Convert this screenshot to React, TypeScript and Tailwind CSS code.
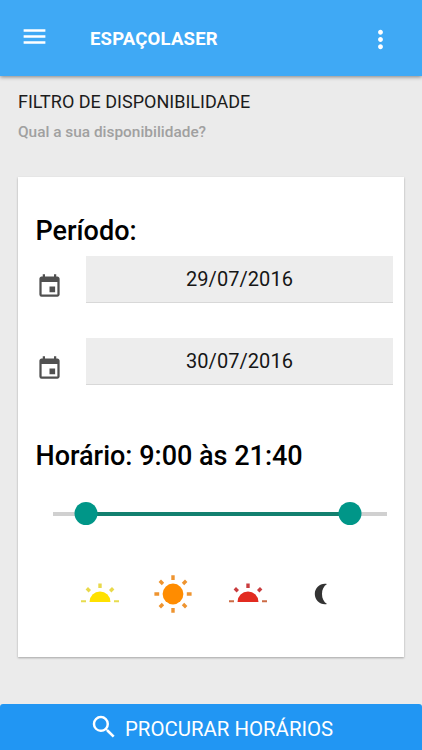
import { MdEvent, MdMenu, MdMoreVert, MdSearch } from 'react-icons/md'

const DATES = ['29/07/2016', '30/07/2016']

const MIN = 0
const MAX = 334
const RANGE = { from: 33, to: 296.5 }

const pct = (value: number) => `${((value - MIN) / (MAX - MIN)) * 100}%`

function Header() {
  return (
    <header className="relative flex h-[76px] shrink-0 items-center bg-[#3fa9f5] pl-[20px] pr-[27px] text-white shadow-[0_1px_4px_rgba(0,0,0,0.45)]">
      <button aria-label="Menu" className="mb-[3px]">
        <MdMenu size={29} />
      </button>
      <h1 className="ml-[41px] mt-px text-[18.5px] font-bold leading-6 tracking-[0.2px]">ESPAÇOLASER</h1>
      <button aria-label="Mais opções" className="ml-auto mt-[2px]">
        <MdMoreVert size={29} />
      </button>
    </header>
  )
}

function DateRow({ date }: { date: string }) {
  return (
    <div className="flex h-[47px] items-start">
      <MdEvent size={27} className="mt-[17px] shrink-0 text-[#505050]" />
      <button className="ml-[23px] h-[47px] flex-1 border-b border-[#d8d8d8] bg-[#ededed] text-[20px] tracking-[0.05px] text-[#161616]">
        {date}
      </button>
    </div>
  )
}

function RangeSlider() {
  return (
    <div className="relative mx-[17px] h-6">
      <div className="absolute inset-x-0 top-[10px] h-[4px] bg-[#d0d0d0]" />
      <div
        className="absolute top-[10px] h-[4px] bg-[#12806f]"
        style={{ left: pct(RANGE.from), right: pct(MAX - RANGE.to) }}
      />
      {[RANGE.from, RANGE.to].map((value) => (
        <span
          key={value}
          className="absolute top-0 size-[23px] -translate-x-1/2 rounded-full bg-[#009688]"
          style={{ left: pct(value) }}
        />
      ))}
    </div>
  )
}

// Half sun over the horizon, used for morning and evening
function HalfSun({ color, rays, ground }: { color: string; rays: string; ground: string }) {
  return (
    <svg width="40" height="24" viewBox="0 0 40 24">
      <path d="M9.5 20a10.5 10.5 0 0 1 21 0z" fill={color} />
      <g stroke={rays} strokeWidth="3.4">
        <path d="M20 1.5v4.6M6.800 6.300l3 3M33.200 6.300l-3 3" />
      </g>
      <path d="M1 19.3h5M34 19.3h5" stroke={ground} strokeWidth="2" />
    </svg>
  )
}

function FullSun() {
  return (
    <svg width="40" height="40" viewBox="0 0 40 40">
      <circle cx="20" cy="20" r="10.4" fill="#ff8c00" />
      <path
        d="M20 1.2v4.800M20 34v4.800M1.400 20h4.800M33.800 20h4.800M6.800 6.800l3.200 3.200M30 30l3.200 3.200M33.200 6.800L30 10M10 30l-3.200 3.200"
        stroke="#ee9430"
        strokeWidth="3.4"
      />
    </svg>
  )
}

function Moon() {
  return (
    <svg width="14" height="22" viewBox="0 0 14 22">
      <path d="M13 1C6.500-.3.800 4.500.800 11S6.500 22.300 13 21C9.700 18.800 8 15.500 8 11S9.700 3.200 13 1z" fill="#333" />
    </svg>
  )
}

export default function App() {
  return (
    <div className="flex h-[750px] w-full flex-col overflow-hidden bg-[#ebebeb] font-[Roboto,sans-serif]">
      <Header />

      <main className="flex-1 px-[18px] pt-[14px]">
        <h2 className="text-[18px] leading-6 text-[#1c1c1c]">FILTRO DE DISPONIBILIDADE</h2>
        <p className="mt-[8px] text-[15.4px] font-medium leading-5 text-[#a0a0a0]">Qual a sua disponibilidade?</p>

        <section className="mt-[35px] h-[480px] bg-white pl-[18px] pr-[12px] pt-[38px] shadow-[0_1px_2px_rgba(0,0,0,0.3)]">
          <h3 className="-ml-[0.5px] text-[27px] font-medium leading-8 text-black">Período:</h3>
          <div className="-mr-px mt-[9px] flex flex-col gap-[35px]">
            {DATES.map((date) => (
              <DateRow key={date} date={date} />
            ))}
          </div>

          <h3 className="-ml-[0.5px] mt-[55px] text-[27px] font-medium leading-8 text-black">Horário: 9:00 às 21:40</h3>
          <div className="-mr-[12px] mt-[30px] w-[368px]">
            <RangeSlider />
          </div>

          {/* Parts of the day */}
          <div className="mt-[48px] flex h-10 items-center pl-[44px]">
            <HalfSun color="#ffe100" rays="#e9d94a" ground="#e6dc4e" />
            <div className="ml-[33px]">
              <FullSun />
            </div>
            <div className="ml-[35px]">
              <HalfSun color="#e22b20" rays="#c93d3f" ground="#cc6b45" />
            </div>
            <div className="ml-[46px]">
              <Moon />
            </div>
          </div>
        </section>
      </main>

      <button className="flex h-[46px] shrink-0 items-center rounded-t-[3px] bg-[#2196f3] pl-[89px] text-white">
        <MdSearch size={30} />
        <span className="ml-[6px] mt-[4px] text-[20.4px] leading-6">PROCURAR HORÁRIOS</span>
      </button>
    </div>
  )
}
